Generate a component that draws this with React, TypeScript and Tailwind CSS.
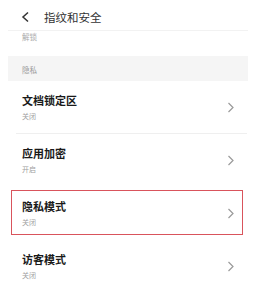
import React from 'react';

const rows = [
  { title: '文档锁定区', sub: '关闭', divider: true },
  { title: '应用加密', sub: '开启' },
  { title: '隐私模式', sub: '关闭', highlight: true },
  { title: '访客模式', sub: '关闭' },
];

function Chevron() {
  return (
    <svg width="8" height="11" viewBox="0 0 8 11" className="shrink-0">
      <path d="M1.5 1 L6 5.5 L1.5 10" fill="none" stroke="#9a9a9a" strokeWidth="1.2" />
    </svg>
  );
}

export default function App() {
  return (
    <div
      className="w-[276px] h-[288px] bg-white overflow-hidden"
      style={{ fontFamily: '"Noto Sans CJK SC", "Noto Sans", sans-serif' }}
    >
      <div className="w-[240px] ml-[8px]">
        {/* Header */}
        <div className="h-[31px] pt-[4px] flex items-center border-b border-[#f2f2f2]">
          <svg width="10" height="12" viewBox="0 0 10 12" className="ml-[13px]">
            <path d="M7 1.5 L2 6 L7 10.5" fill="none" stroke="#333" strokeWidth="1.5" />
          </svg>
          <span className="ml-[13px] text-[11.5px] leading-[13px] text-[#333]">指纹和安全</span>
        </div>

        {/* tail of previous item */}
        <div className="h-[25px] pl-[14px] pt-[1px]">
          <span className="block text-[7.5px] leading-[9px] text-[#aaa]">解锁</span>
        </div>

        {/* Section */}
        <div className="h-[25px] bg-[#f5f5f5] pl-[14px] pt-[2px] flex items-center">
          <span className="text-[7.5px] leading-[9px] text-[#9a9a9a]">隐私</span>
        </div>

        {rows.map((r) => (
          <div key={r.title} className="relative h-[53px]">
            <div className="h-full pl-[14px] pr-[13px] flex items-center justify-between">
              <div className="flex flex-col gap-[5px] -mt-[1px]">
                <span className="text-[11px] leading-[13px] font-bold text-[#1a1a1a]">{r.title}</span>
                <span className="text-[7px] leading-[9px] text-[#a0a0a0]">{r.sub}</span>
              </div>
              <Chevron />
            </div>
            {r.divider && <div className="absolute left-[8px] right-[1px] bottom-0 h-px bg-[#efefef]" />}
            {r.highlight && (
              <div className="absolute left-[3px] right-[5px] top-[3px] bottom-[5px] border-[1.5px] border-[#d9545c]" />
            )}
          </div>
        ))}
      </div>
    </div>
  );
}
